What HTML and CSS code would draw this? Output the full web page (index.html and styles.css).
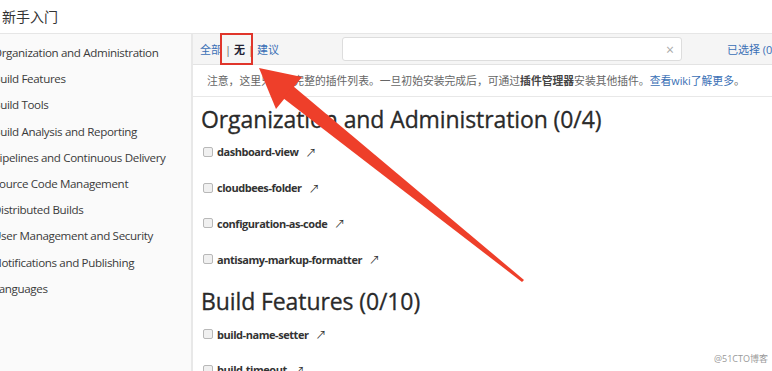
FILE: index.html
```html
<!DOCTYPE html>
<html lang="zh-CN">
<head>
    <meta charset="UTF-8">
    <title>新手入门</title>
    <link rel="stylesheet" href="styles.css">
</head>
<body>
    <div class="header">新手入门</div>

    <div class="wrap">
        <ul class="sidebar">
            <li>Organization and Administration</li>
            <li>Build Features</li>
            <li>Build Tools</li>
            <li>Build Analysis and Reporting</li>
            <li>Pipelines and Continuous Delivery</li>
            <li>Source Code Management</li>
            <li>Distributed Builds</li>
            <li>User Management and Security</li>
            <li>Notifications and Publishing</li>
            <li>Languages</li>
        </ul>

        <div class="main">
            <div class="toolbar">
                <div class="filters">
                    <a class="link">全部</a><span class="sep">|</span><b class="on">无</b><span class="sep">|</span><a class="link">建议</a>
                </div>
                <div class="search"><span class="clear">×</span></div>
                <a class="link selected">已选择 (0/</a>
            </div>

            <div class="notice">
                注意，这里只显示完整的插件列表。一旦初始安装完成后，可通过<b>插件管理器</b>安装其他插件。<a class="link">查看wiki了解更多</a>。
            </div>

            <div class="category">
                <h2>Organization and Administration (0/4)</h2>
                <div class="plugin"><span class="box"></span>dashboard-view<span class="ext">↗</span></div>
                <div class="plugin"><span class="box"></span>cloudbees-folder<span class="ext">↗</span></div>
                <div class="plugin"><span class="box"></span>configuration-as-code<span class="ext">↗</span></div>
                <div class="plugin"><span class="box"></span>antisamy-markup-formatter<span class="ext">↗</span></div>
            </div>

            <div class="category">
                <h2>Build Features (0/10)</h2>
                <div class="plugin"><span class="box"></span>build-name-setter<span class="ext">↗</span></div>
                <div class="plugin"><span class="box"></span>build-timeout<span class="ext">↗</span></div>
            </div>
        </div>
    </div>

    <!-- 标注：红框和箭头 -->
    <svg class="mark" width="772" height="371" viewBox="0 0 772 371">
        <rect x="221" y="34" width="31" height="30" fill="none" stroke="#e0352b" stroke-width="2"/>
        <polygon points="259,68 302,77 276,109" fill="#ee3f2a"/>
        <polygon points="293,86 524,280 522,282 283,98" fill="#ee3f2a"/>
    </svg>

    <div class="watermark">@51CTO博客</div>
</body>
</html>
```

FILE: styles.css
```css
* {
    margin: 0;
    padding: 0;
    box-sizing: border-box;
}

body {
    width: 772px;
    height: 371px;
    overflow: hidden;
    background: #fff;
    color: #333;
    font-family: 'Open Sans', 'Noto Sans CJK SC', sans-serif;
}

.header {
    height: 34px;
    line-height: 33px;
    padding-left: 2px;
    font-size: 14px;
    color: #333;
    border-bottom: 1px solid #e6e6e6;
}

.wrap {
    display: flex;
    height: 337px;
}

.sidebar {
    list-style: none;
    width: 193px;
    flex-shrink: 0;
    background: #fafafa;
    border-right: 2px solid #e8e8e8;
    padding-top: 6px;
    font-size: 11.6px;
    letter-spacing: -0.35px;
    color: #3a3a3a;
}

.sidebar li {
    height: 26.2px;
    line-height: 26px;
    margin-left: -7px;
    white-space: nowrap;
}

.main {
    flex: 1;
    min-width: 0;
    overflow: hidden;
}

.toolbar {
    display: flex;
    align-items: center;
    height: 31px;
    background: #f5f5f5;
    border-bottom: 1px solid #e3e3e3;
    padding-left: 7px;
    font-size: 11px;
}

.link {
    color: #3a6fb5;
}

.filters {
    width: 142px;
    flex-shrink: 0;
    white-space: nowrap;
}

.sep {
    color: #666;
    margin: 0 3px;
}

.on {
    color: #223;
}

.search {
    width: 340px;
    height: 24px;
    flex-shrink: 0;
    background: #fff;
    border: 1px solid #ddd;
    border-radius: 3px;
    display: flex;
    align-items: center;
    justify-content: flex-end;
    padding-right: 7px;
}

.clear {
    color: #aaa;
    font-size: 14px;
}

.selected {
    margin-left: 45px;
    flex-shrink: 0;
    white-space: nowrap;
}

.notice {
    height: 32px;
    line-height: 31px;
    padding-left: 14px;
    font-size: 10.8px;
    color: #666;
    border-bottom: 1px solid #e8e8e8;
    white-space: nowrap;
}

.notice b {
    color: #444;
}

.category h2 {
    font-weight: 400;
    font-size: 23px;
    letter-spacing: -0.1px;
    color: #2a2a2a;
    -webkit-text-stroke: 0.3px #2a2a2a;
    padding-left: 8px;
    height: 37px;
    line-height: 44px;
}

.category + .category h2 {
    margin-top: 2px;
}

.plugin {
    display: flex;
    align-items: center;
    height: 35.8px;
    padding-left: 10px;
    font-size: 11px;
    font-weight: 700;
    letter-spacing: -0.45px;
    color: #333;
}

.box {
    width: 10px;
    height: 10px;
    border: 1px solid #b8b8b8;
    background: #f0f0f0;
    border-radius: 2px;
    margin-right: 4px;
}

.ext {
    margin-left: 7px;
    font-weight: 400;
    font-size: 11px;
}

.mark {
    position: absolute;
    left: 0;
    top: 0;
}

.watermark {
    position: absolute;
    right: 4px;
    bottom: 6px;
    font-size: 9px;
    color: #999;
}
```
